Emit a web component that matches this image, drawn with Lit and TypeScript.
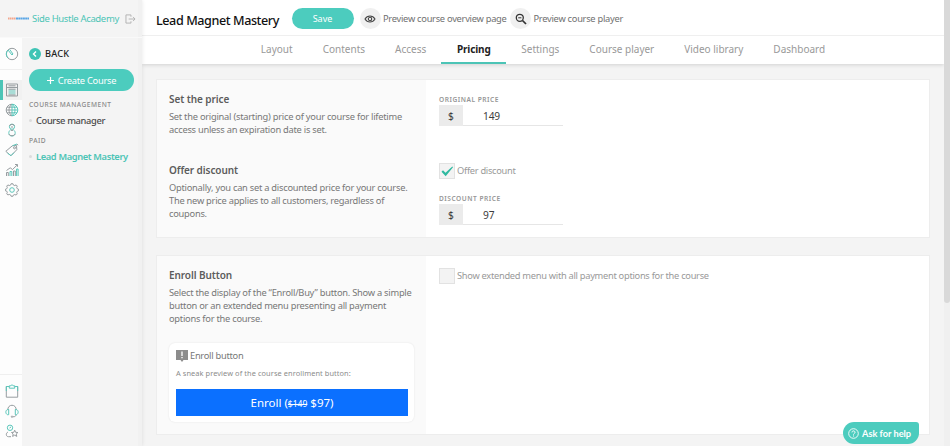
import { LitElement, html, css, svg } from "lit";
import { customElement, property } from "lit/decorators.js";
import { classMap } from "lit/directives/class-map.js";

const icons: Record<string, unknown> = {
  gauge: svg`<circle cx="7" cy="7" r="5.7" class="g"/><path class="t" d="M2.800 3.200A5.700 5.700 0 0 0 3 11M3 3l4 5 1-1-3.400-4.600"/>`,
  courses: svg`<path class="g" d="M1.500 1h11v12h-11zM1.500 4.500h11M3.500 2.800h7"/><path class="f" d="M3.500 6.500h7v5h-7z"/><path class="g" d="M3.500 6.200h7M3.500 12h7"/>`,
  globe: svg`<path class="g" d="M7 1.200a5.800 5.800 0 0 0 0 11.600M7 1.200C3 4 3 10 7 12.800M1.300 7H7M2 4.200h5M2 9.800h5"/><path class="t" d="M7 1.200a5.800 5.800 0 0 1 0 11.600zM7 1.200c4 2.800 4 8.800 0 11.600M7 7h5.700M7 4.200h5M7 9.800h5"/>`,
  user: svg`<circle class="t" cx="7" cy="3.700" r="2.600"/><path class="g" d="M4.500 3a2.700 2.700 0 0 1 5 0M5.700 6.300 7 8l1.300-1.700"/><path class="t" d="M5.500 7C2.800 8.500 3.300 13 7 13s4.200-4.500 1.500-6"/><path class="g" d="M3.900 11c1 2.300 5.200 2.300 6.200 0M6 4h2"/>`,
  tag: svg`<path class="g" d="M.8 8.300 7.300 2.800l4.200-.3.300 4.200-5.900 6.100zM12 1.200l1.200 1"/><path class="t" d="M2.600 10.200 6 12.600l3-3M7.500 2.700 12 1"/><circle class="g" cx="9.500" cy="4.800" r="1"/>`,
  chart: svg`<path class="g" d="M1.500 13V9.500h1.800V13M8.500 13V8h1.800v5"/><path class="t" d="M5 13V8.500h1.800V13M11.600 13V6h1.500v7"/><path class="g" d="m1.500 7.500 3.700-2.700L7.500 6.500l4.700-4.500M10 1.500h2.500v2.300"/>`,
  gear: svg`<path class="g" d="m5.700 2 .4-1.300h1.800L8.300 2l1.500.6 1.300-.7 1.200 1.200-.6 1.300.6 1.400 1.200.4v1.600l-1.200.4-.6 1.500.6 1.200-1.200 1.200-1.300-.6-1.500.6-.4 1.200H6.100L5.700 12l-1.500-.6-1.300.6-1.200-1.200.6-1.200-.6-1.500L.5 7.800V6.200l1.200-.4.6-1.400-.6-1.300 1.200-1.200 1.300.7z"/><circle class="t" cx="7" cy="7" r="2.300"/>`,
  clipboard: svg`<path class="g" d="M4 2.500H1.300v10.700h11.400V2.500H10"/><path class="t" d="M4.300 4.200V1.800h1.500c.2-1.200 2.200-1.200 2.400 0h1.500v2.400zM1.300 7V2.500H4M12.700 7V2.500H10"/>`,
  headset: svg`<path class="g" d="M2.800 6.200C2.400-.4 11.600-.4 11.200 6.200M11 10.500c0 1.700-1 2.300-3 2.300"/><path class="t" d="M3.700 5.500H2.500C.3 6.500.3 9.700 2.500 10.700h1.200zM10.300 5.500h1.200c2.200 1 2.200 4.200 0 5.200h-1.200z"/><circle class="g" cx="7" cy="12.700" r=".7"/>`,
  award: svg`<circle class="t" cx="5" cy="3.800" r="2.700"/><path class="t" d="M4.500 4 6 3"/><path class="g" d="M3 8C.6 9 .8 12.700 3.500 12.700H6M9.700 6.200l.9 2.100 2.300.2-1.700 1.500.6 2.400-2.100-1.200-2.100 1.200.6-2.400-1.700-1.500 2.300-.2z"/>`,
};

@customElement("rail-icon")
class RailIcon extends LitElement {
  @property() name = "";
  static styles = css`
    :host { display: block; width: 14px; height: 14px; }
    svg { display: block; fill: none; stroke-width: 1; }
    .g { stroke: #979da0; }
    .t { stroke: #5cc7bb; }
    .f { fill: #a9dcd6; }
  `;
  render() {
    return html`<svg width="14" height="14" viewBox="0 0 14 14">${icons[this.name]}</svg>`;
  }
}

@customElement("price-field")
class PriceField extends LitElement {
  @property() label = "";
  @property() value = "";
  static styles = css`
    :host { display: block; width: 124px; }
    .label { font-size: 6.6px; line-height: 10px; font-weight: 600; letter-spacing: 0.52px; color: #969696; }
    .row { display: flex; height: 21px; box-sizing: border-box; border-bottom: 1px solid #e6e6e6; font-size: 10.2px; line-height: 22px; color: #3c3c3c; }
    .unit { width: 24px; height: 21px; background: #ebebeb; text-align: center; }
    .value { padding-left: 20px; letter-spacing: -0.15px; }
  `;
  render() {
    return html`<div class="label">${this.label}</div>
      <div class="row"><span class="unit">$</span><span class="value">${this.value}</span></div>`;
  }
}

@customElement("check-row")
class CheckRow extends LitElement {
  @property({ type: Boolean }) checked = false;
  @property() label = "";
  static styles = css`
    :host { display: flex; align-items: center; gap: 2px; height: 16px; font-size: 9.3px; letter-spacing: -0.29px; color: #999; white-space: nowrap; }
    .box { width: 16px; height: 16px; box-sizing: border-box; border: 1px solid #e2e2e2; background: #f3f3f3; }
    .text { line-height: 14px; margin-top: -1px; }
    svg { display: block; }
  `;
  render() {
    return html`<span class="box">${this.checked
        ? html`<svg width="14" height="14" viewBox="0 0 14 14"><path d="M1.500 7.800 3 6.300l2.500 2.400L12.300 2.500l.7.800-7.300 9z" fill="#2fb9a0"/></svg>`
        : ""}</span><span class="text">${this.label}</span>`;
  }
}

@customElement("app-root")
class AppRoot extends LitElement {
  static styles = css`
    :host { display: flex; width: 950px; height: 446px; overflow: hidden; background: #f4f4f4; font-family: "Noto Sans", "Open Sans", sans-serif; color: #777; position: relative; }
    .sidebar { width: 142px; display: flex; flex-direction: column; background: #f4f4f4; box-shadow: 0 0 4px rgba(0, 0, 0, 0.1), inset -4px 0 0 #f1f1f1; z-index: 2; }
    .brand { height: 38px; box-sizing: border-box; border-bottom: 1px solid #f9f9f9; display: flex; align-items: center; padding-left: 8px; }
    .logo { width: 21px; height: 3px; margin-right: 3px; flex: none; }
    .brand-name { width: 93px; flex: none; font-size: 9.5px; letter-spacing: -0.34px; color: #4cc4b6; white-space: nowrap; }
    .side-body { flex: 1; display: flex; }
    .rail { width: 22px; background: #fdfdfd; display: flex; flex-direction: column; justify-content: space-between; }
    .slot { height: 20px; display: flex; align-items: center; padding-left: 5px; }
    .first { height: 31px; border-bottom: 1px solid #efefef; margin-bottom: 10px; }
    .slot.active { background: #f1f1f1; padding-left: 2px; border-left: 3px solid #4cc4b6; }
    .rail-bottom { border-top: 1px solid #efefef; padding: 6px 0 5px; }
    .menu { padding: 9px 0 0 7px; width: 105px; white-space: nowrap; }
    .back { display: flex; align-items: center; gap: 4px; height: 13px; font-size: 9.2px; letter-spacing: 0.2px; color: #222; font-weight: 500; }
    .back svg { display: block; }
    .create { height: 22px; margin-top: 9px; border-radius: 11px; background: #4cccbe; color: #fff; display: flex; align-items: center; justify-content: center; gap: 4px; font-size: 9.3px; letter-spacing: -0.27px; }
    .group { font-size: 6.6px; line-height: 10px; letter-spacing: 0.5px; color: #8a8a8a; font-weight: 500; }
    .item { display: flex; align-items: center; gap: 4px; height: 14px; font-size: 9.3px; letter-spacing: -0.35px; color: #4a4a4a; font-weight: 500; }
    .item::before { content: ""; width: 3px; height: 3px; border-radius: 50%; background: #dcdcdc; }
    .item.current { color: #4cc4b6; font-weight: 600; letter-spacing: -0.36px; }
    .group { margin-top: 9px; }
    .item { margin-top: 3px; }
    .main { flex: 1; display: flex; flex-direction: column; }
    .head { background: #fff; box-shadow: 0 1px 4px rgba(0, 0, 0, 0.14); height: 64px; white-space: nowrap; }
    .top { height: 36px; box-sizing: border-box; border-bottom: 1px solid #efefef; display: flex; align-items: center; padding: 2px 0 0 14px; }
    .title { width: 135.5px; font-size: 12.6px; font-weight: 500; letter-spacing: -0.42px; color: #111; margin-top: 3px; }
    .save { width: 62px; height: 21px; border-radius: 11px; background: #4cccbe; color: #fff; font-size: 9px; line-height: 21px; text-align: center; margin-right: 6px; }
    .round { width: 21px; height: 21px; border-radius: 50%; background: #f0f0f0; display: flex; align-items: center; justify-content: center; margin-right: 2.5px; }
    .link { font-size: 9.3px; color: #707070; letter-spacing: -0.27px; }
    .overview { width: 127px; }
    .tabs { display: flex; justify-content: center; height: 28px; }
    .tab { box-sizing: border-box; text-align: center; padding: 0 15px; font-size: 10px; line-height: 27px; color: #999; border-bottom: 2px solid transparent; }
    .tab.on { width: 65px; padding: 0; color: #222; font-weight: 700; letter-spacing: -0.15px; border-bottom-color: #4cc4b6; }
    .panels { display: flex; flex-direction: column; gap: 17px; padding: 15px 14px 0; }
    .panel { display: flex; box-sizing: border-box; border: 1px solid #ededed; background: #fff; }
    .price { height: 159px; }
    .button { height: 180px; }
    .info { width: 269px; box-sizing: border-box; padding: 12px 12px 0; background: #fafafa; }
    .info h3 { margin: 0 0 4px; font-size: 10px; line-height: 14px; font-weight: 600; letter-spacing: -0.08px; color: #5c5c5c; }
    .info p { margin: 0; font-size: 9.3px; line-height: 13px; letter-spacing: -0.25px; white-space: nowrap; }
    .block { height: 71px; }
    .form { padding: 15px 0 0 13px; }
    .button .form { padding-top: 12px; }
    .offer { margin: 37px 0 15px; }
    .preview { margin-top: 18px; width: 245px; height: 79px; box-sizing: border-box; background: #fff; border-radius: 6px; padding: 6px 7px; box-shadow: 0 0 2px rgba(0, 0, 0, 0.1); }
    .pv-title { display: flex; align-items: center; gap: 2px; font-size: 9.3px; letter-spacing: -0.27px; line-height: 14px; height: 14px; }
    .pv-note { font-size: 7.4px; letter-spacing: 0.08px; line-height: 10px; margin-top: 5px; color: #8c8c8c; white-space: nowrap; }
    .enroll { margin-top: 11px; height: 27px; width: 232px; background: #0b70ff; color: #fff; font-size: 11.5px; line-height: 28px; text-align: center; }
    .enroll s { font-size: 8.5px; }
    .scroll { width: 6px; background: #f0f0f0; }
    .thumb { height: 303px; background: #d9d9d9; border-radius: 0 0 3px 3px; }
    .help { position: absolute; left: 843px; top: 422px; width: 76px; height: 22px; border-radius: 11px 3px 11px 11px; background: #4cccbe; color: #fff; display: flex; align-items: center; gap: 3px; padding-left: 5px; box-sizing: border-box; font-family: Lato, sans-serif; font-size: 9.2px; font-weight: 700; white-space: nowrap; }
  `;
  render() {
    const tabs = ["Layout", "Contents", "Access", "Pricing", "Settings", "Course player", "Video library", "Dashboard"];
    const slot = (n: string, c = "") => html`<div class="slot ${c}"><rail-icon name=${n}></rail-icon></div>`;
    return html`
      <aside class="sidebar">
        <div class="brand">
          <svg class="logo" viewBox="0 0 21 3"><path d="M0 1.500h8" stroke="#f2a68d" stroke-width="2" stroke-dasharray="1.500 .4"/><path d="M8 1.500h13" stroke="#5aa6e6" stroke-width="2" stroke-dasharray="2 .3"/></svg>
          <span class="brand-name">Side Hustle Academy</span>
          <svg width="11" height="10" viewBox="0 0 12 11" fill="none" stroke="#b0b0b0"><path d="M6.500 3V1H1v9h5.500V8M4 5.500h7M8.800 3.200 11 5.500 8.800 7.800"/></svg>
        </div>
        <div class="side-body">
          <nav class="rail">
            <div>${slot("gauge", "first")}${slot("courses", "active")}${["globe", "user", "tag", "chart", "gear"].map((n) => slot(n))}</div>
            <div class="rail-bottom">${["clipboard", "headset", "award"].map((n) => slot(n))}</div>
          </nav>
          <div class="menu">
            <div class="back"><svg width="12" height="12" viewBox="0 0 12 12"><circle cx="6" cy="6" r="6" fill="#3fc4b5"/><path d="M7 3.500 4.500 6 7 8.500" fill="none" stroke="#fff" stroke-width="1.400"/></svg>BACK</div>
            <div class="create"><svg width="7" height="7" viewBox="0 0 7 7"><path d="M3.500 0v7M0 3.500h7" stroke="#fff" stroke-width="1.200"/></svg>Create Course</div>
            <div class="group">COURSE MANAGEMENT</div>
            <div class="item">Course manager</div>
            <div class="group">PAID</div>
            <div class="item current">Lead Magnet Mastery</div>
          </div>
        </div>
      </aside>
      <main class="main">
        <header class="head">
          <div class="top">
            <div class="title">Lead Magnet Mastery</div>
            <div class="save">Save</div>
            <div class="round"><svg width="12" height="8" viewBox="0 0 12 8" fill="none" stroke="#444" stroke-width="1.100"><path d="M1 4c2.500-4 7.500-4 10 0-2.500 4-7.500 4-10 0z"/><circle cx="6" cy="4" r="1.700"/></svg></div>
            <div class="link overview">Preview course overview page</div>
            <div class="round"><svg width="12" height="12" viewBox="0 0 12 12" fill="none" stroke="#333"><circle cx="4.800" cy="4.800" r="3.500" stroke-width="1.300"/><path d="m7.500 7.500 3.500 3.500" stroke-width="1.700"/><path d="M3.200 4.800h3.200"/></svg></div>
            <div class="link">Preview course player</div>
          </div>
          <nav class="tabs">${tabs.map((t) => html`<div class=${classMap({ tab: true, on: t === "Pricing" })}>${t}</div>`)}</nav>
        </header>
        <div class="panels">
          <section class="panel price">
            <div class="info">
              <div class="block"><h3>Set the price</h3><p>Set the original (starting) price of your course for lifetime<br>access unless an expiration date is set.</p></div>
              <h3>Offer discount</h3><p>Optionally, you can set a discounted price for your course.<br>The new price applies to all customers, regardless of<br>coupons.</p>
            </div>
            <div class="form">
              <price-field label="ORIGINAL PRICE" value="149"></price-field>
              <check-row class="offer" checked label="Offer discount"></check-row>
              <price-field label="DISCOUNT PRICE" value="97"></price-field>
            </div>
          </section>
          <section class="panel button">
            <div class="info">
              <h3>Enroll Button</h3><p>Select the display of the “Enroll/Buy” button. Show a simple<br>button or an extended menu presenting all payment<br>options for the course.</p>
              <div class="preview">
                <div class="pv-title"><svg width="12" height="12" viewBox="0 0 12 12"><path d="M0 0h12v10H7.500L6 12 4.500 10H0z" fill="#8c8c8c"/><path d="M6 1.500v4.500M6 7v1.300" stroke="#fff" stroke-width="1.300"/></svg>Enroll button</div>
                <div class="pv-note">A sneak preview of the course enrollment button:</div>
                <div class="enroll">Enroll (<s>$149</s> $97)</div>
              </div>
            </div>
            <div class="form"><check-row label="Show extended menu with all payment options for the course"></check-row></div>
          </section>
        </div>
      </main>
      <div class="scroll"><div class="thumb"></div></div>
      <div class="help"><svg width="11" height="11" viewBox="0 0 11 11" fill="none" stroke="#fff"><circle cx="5.500" cy="5.500" r="4.800" stroke-width=".9"/><path d="M4 4.400c0-2 3-2 3 0 0 1.200-1.500 1-1.500 2.200M5.500 7.500v1"/></svg>Ask for help</div>`;
  }
}
